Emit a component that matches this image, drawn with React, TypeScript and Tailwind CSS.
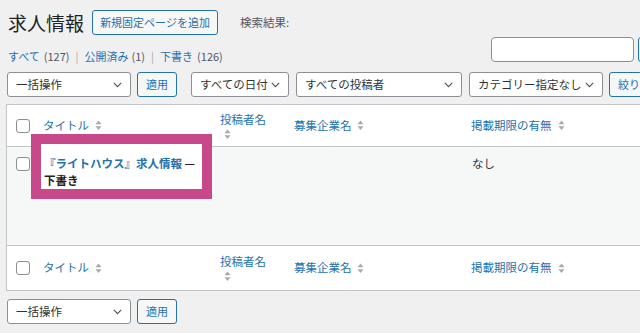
import React from "react";

const Chevron = () => (
  <svg width="9" height="6" viewBox="0 0 9 6" fill="none" className="shrink-0">
    <path d="M0.8 0.8L4.5 4.6L8.2 0.8" stroke="#50575e" strokeWidth="1.2" />
  </svg>
);

const SortArrows = () => (
  <svg width="7" height="11" viewBox="0 0 7 11" className="shrink-0">
    <path d="M3.5 0.5L6.5 4.2H0.5Z" fill="#a7aaad" />
    <path d="M0.5 6.3H6.5L3.5 10Z" fill="#a7aaad" />
  </svg>
);

const Checkbox = () => (
  <div className="w-[14px] h-[14px] border border-[#8c8f94] rounded-[3px] bg-white" />
);

function Select({ label, w, className = "" }: { label: string; w: string; className?: string }) {
  return (
    <div
      className={`${w} h-[25px] shrink-0 flex items-center justify-between pl-[8px] pr-[8px] bg-white border border-[#8c8f94] rounded-[3px] text-[11.5px] text-[#2c3338] ${className}`}
    >
      <span className="whitespace-nowrap">{label}</span>
      <Chevron />
    </div>
  );
}

function Btn({ label, className = "" }: { label: string; className?: string }) {
  return (
    <div
      className={`h-[25px] shrink-0 flex items-center bg-[#f6f7f7] border border-[#2271b1] rounded-[3px] text-[11px] text-[#2271b1] whitespace-nowrap ${className}`}
    >
      {label}
    </div>
  );
}

function HeadRow({ h, border }: { h: string; border: string }) {
  return (
    <div className={`grid grid-cols-[30px_176px_73px_177px_1fr] items-center ${h} ${border} border-[#c3c4c7] bg-white text-[11.5px] text-[#2271b1]`}>
      <div className="pl-[9px] flex items-center">
        <Checkbox />
      </div>
      <div className="pl-[6px] flex items-center gap-[6px]">
        <span>タイトル</span>
        <SortArrows />
      </div>
      <div className="pl-[7px] flex flex-col items-start leading-[15px]">
        <span>投稿者名</span>
        <span className="pl-[4px] pt-[2px]">
          <SortArrows />
        </span>
      </div>
      <div className="pl-[8px] flex items-center gap-[5px]">
        <span>募集企業名</span>
        <SortArrows />
      </div>
      <div className="pl-[8px] flex items-center gap-[6px]">
        <span>掲載期限の有無</span>
        <SortArrows />
      </div>
    </div>
  );
}

export default function App() {
  return (
    <div className="w-[640px] h-[333px] overflow-hidden bg-[#f0f0f1] text-[#1d2327] font-['Noto_Sans_CJK_JP','Noto_Sans',sans-serif]">
      {/* Title row */}
      <div className="flex items-center h-[25px] mt-[10px] pl-[8px]">
        <h1 className="text-[19px] leading-[25px] font-normal text-[#1d2327]">求人情報</h1>
        <Btn label="新規固定ページを追加" className="ml-[8px] px-[8px] w-[126px] justify-center" />
        <span className="ml-[22px] text-[11.5px] text-[#50575e]">検索結果:</span>
      </div>

      {/* Status links + search */}
      <div className="flex w-[704px] mt-[2px] pl-[8px]">
        <div className="pt-[11px] text-[11px] leading-[16px] flex items-center whitespace-nowrap">
          <span className="text-[#2271b1]">すべて</span>
          <span className="ml-[4px] text-[#50575e]">(127)</span>
          <span className="mx-[6px] text-[#a7aaad]">|</span>
          <span className="text-[#2271b1]">公開済み</span>
          <span className="ml-[3px] text-[#50575e]">(1)</span>
          <span className="mx-[6px] text-[#a7aaad]">|</span>
          <span className="text-[#2271b1]">下書き</span>
          <span className="ml-[4px] text-[#50575e]">(126)</span>
        </div>
        <div className="ml-auto flex gap-[4px]">
          <div className="w-[143px] h-[25px] bg-white border border-[#8c8f94] rounded-[4px]" />
          <Btn label="固定ページを検索" className="w-[66px] px-[9px]" />
        </div>
      </div>

      {/* Filters */}
      <div className="flex items-center mt-[8px] pl-[7px] w-[720px]">
        <Select label="一括操作" w="w-[124px]" />
        <Btn label="適用" className="ml-[6px] w-[40px] justify-center" />
        <Select label="すべての日付" w="w-[98px]" className="ml-[14px]" />
        <Select label="すべての投稿者" w="w-[166px]" className="ml-[7px]" />
        <Select label="カテゴリー指定なし" w="w-[134px]" className="ml-[7px]" />
        <Btn label="絞り込み" className="ml-[6px] px-[8px]" />
      </div>

      {/* Table */}
      <div className="mt-[7px] ml-[6px] w-[720px] border border-[#c3c4c7] bg-white">
        <HeadRow h="h-[42px]" border="border-b" />
        <div className="grid grid-cols-[30px_176px_73px_177px_1fr] h-[99px] bg-[#f6f7f7] border-b border-[#c3c4c7] text-[11.5px]">
          <div className="pl-[9px] pt-[10px]">
            <Checkbox />
          </div>
          <div className="relative pl-[7px] pr-[7px] pt-[8px]">
            <div className="absolute left-[-6px] top-[-13px] w-[181px] h-[65px] border-[10px] border-[#c8498b] bg-white z-10" />
            <p className="relative z-20 font-bold leading-[17px] text-[#1d2327]">
              <span className="text-[#2271b1]">『ライトハウス』求人情報</span> — 下書き
            </p>
          </div>
          <div />
          <div />
          <div className="pl-[9px] pt-[8px] leading-[17px] text-[#2c3338]">なし</div>
        </div>
        <HeadRow h="h-[44px]" border="" />
      </div>

      {/* Bottom bulk actions */}
      <div className="flex items-center mt-[8px] pl-[7px]">
        <Select label="一括操作" w="w-[124px]" />
        <Btn label="適用" className="ml-[6px] w-[40px] justify-center" />
      </div>
    </div>
  );
}
